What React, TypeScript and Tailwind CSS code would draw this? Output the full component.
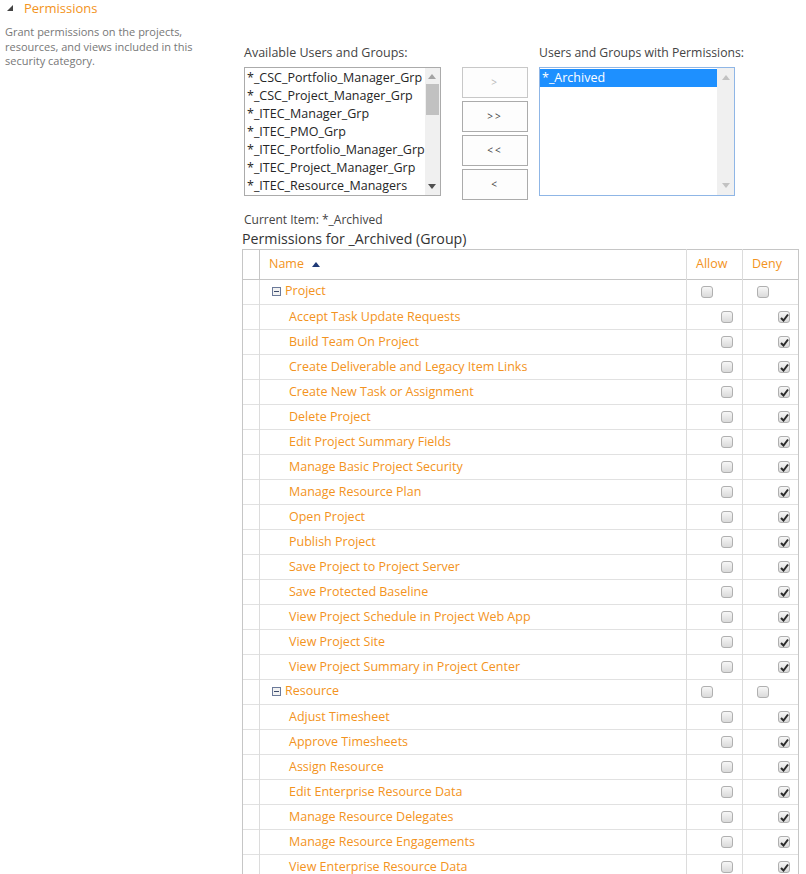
import React from 'react';

const available = [
  '*_CSC_Portfolio_Manager_Grp',
  '*_CSC_Project_Manager_Grp',
  '*_ITEC_Manager_Grp',
  '*_ITEC_PMO_Grp',
  '*_ITEC_Portfolio_Manager_Grp',
  '*_ITEC_Project_Manager_Grp',
  '*_ITEC_Resource_Managers',
];

const categories = [
  {
    name: 'Project',
    items: [
      'Accept Task Update Requests',
      'Build Team On Project',
      'Create Deliverable and Legacy Item Links',
      'Create New Task or Assignment',
      'Delete Project',
      'Edit Project Summary Fields',
      'Manage Basic Project Security',
      'Manage Resource Plan',
      'Open Project',
      'Publish Project',
      'Save Project to Project Server',
      'Save Protected Baseline',
      'View Project Schedule in Project Web App',
      'View Project Site',
      'View Project Summary in Project Center',
    ],
  },
  {
    name: 'Resource',
    items: [
      'Adjust Timesheet',
      'Approve Timesheets',
      'Assign Resource',
      'Edit Enterprise Resource Data',
      'Manage Resource Delegates',
      'Manage Resource Engagements',
      'View Enterprise Resource Data',
    ],
  },
];

const Checkbox = ({ checked }: { checked?: boolean }) => (
  <span className="inline-flex h-[12px] w-[12px] items-center justify-center rounded-[3px] border border-[#b0b0b0] bg-gradient-to-b from-[#f7f7f7] to-[#dadada] align-middle">
    {checked && (
      <svg width="9" height="9" viewBox="0 0 9 9">
        <path d="M1 5 L3.5 7.5 L8 1.5" fill="none" stroke="#2b2b2b" strokeWidth="2" />
      </svg>
    )}
  </span>
);

const ScrollArrow = ({ down, color }: { down?: boolean; color: string }) => (
  <svg width="8" height="5" viewBox="0 0 8 5">
    <path d={down ? 'M0 0 L8 0 L4 5 Z' : 'M0 5 L8 5 L4 0 Z'} fill={color} />
  </svg>
);

const MoveButton = ({ label, disabled }: { label: string; disabled?: boolean }) => (
  <button
    className={`h-[31px] w-[66px] border bg-[#fdfdfd] text-[10px] tracking-[2px] ${
      disabled ? 'border-[#c8c8c8] text-[#b8b8b8]' : 'border-[#ababab] text-[#444]'
    }`}
  >
    {label}
  </button>
);

export default function App() {
  return (
    <div className="flex h-[874px] overflow-hidden bg-white font-['Open_Sans',sans-serif] text-[#444]">
      {/* section description */}
      <div className="w-[242px] shrink-0 pl-[5px]">
        <div className="flex items-center pt-[1px]">
          <svg width="6" height="6" viewBox="0 0 6 6" className="ml-[2px]">
            <path d="M6 0 L6 6 L0 6 Z" fill="#444" />
          </svg>
          <span className="ml-[11px] text-[13px] leading-[14px] text-[#f39321]">Permissions</span>
        </div>
        <p className="mt-[10px] w-[195px] text-[11px] leading-[14.5px] text-[#777]">
          Grant permissions on the projects, resources, and views included in this security category.
        </p>
      </div>

      <div className="flex-1 pt-[44px]">
        {/* user pickers */}
        <div className="flex items-start">
          <div className="ml-[2px] w-[197px]">
            <div className="whitespace-nowrap text-[12.5px] leading-[17px] text-[#444]">Available Users and Groups:</div>
            <div className="mt-[6px] flex h-[129px] border border-[#ababab]">
              <ul className="flex-1 pl-[2px] pt-[1px] text-[12.5px] leading-[18px] text-[#262626]">
                {available.map(name => (
                  <li key={name} className="whitespace-nowrap">{name}</li>
                ))}
              </ul>
              <div className="flex w-[16px] flex-col items-center bg-[#f0f0f0] py-[6px]">
                <ScrollArrow color="#a3a3a3" />
                <div className="mt-[5px] h-[31px] w-[13px] bg-[#c1c1c1]" />
                <div className="flex-1" />
                <ScrollArrow down color="#505050" />
              </div>
            </div>
          </div>

          <div className="ml-[21px] mt-[23px] flex flex-col gap-[3px]">
            <MoveButton label=">" disabled />
            <MoveButton label=">>" />
            <MoveButton label="<<" />
            <MoveButton label="<" />
          </div>

          <div className="ml-[11px] w-[196px]">
            <div className="whitespace-nowrap text-[12.2px] leading-[17px] text-[#444]">Users and Groups with Permissions:</div>
            <div className="mt-[6px] flex h-[129px] border border-[#8fb6e6]">
              <ul className="flex-1 pt-[1px] text-[12.5px] leading-[18px]">
                <li className="bg-[#1e90ff] pl-[2px] text-white">*_Archived</li>
              </ul>
              <div className="flex w-[17px] flex-col items-center bg-[#f0f0f0] py-[7px]">
                <ScrollArrow color="#c2c2c2" />
                <div className="flex-1" />
                <ScrollArrow color="#c2c2c2" down />
              </div>
            </div>
          </div>
        </div>

        <div className="ml-[2px] mt-[11px] text-[12px] leading-[18px] text-[#444]">Current Item: *_Archived</div>
        <div className="mt-[1px] text-[14.2px] leading-[18px] text-[#333]">Permissions for _Archived (Group)</div>

        {/* permission grid */}
        <table className="mt-[1px] w-[556px] table-fixed border-collapse text-[12.5px] text-[#f39321]">
          <colgroup>
            <col className="w-[17px]" />
            <col className="w-[427px]" />
            <col className="w-[56px]" />
            <col className="w-[56px]" />
          </colgroup>
          <thead>
            <tr className="h-[30px] border-y border-[#c6c6c6]">
              <th className="border-x border-[#c6c6c6]" />
              <th className="border-r border-[#dcdcdc] pl-[9px] text-left font-normal">
                <span className="inline-flex items-center gap-[8px]">
                  Name
                  <svg width="8" height="5" viewBox="0 0 8 5">
                    <path d="M0 5 L8 5 L4 0 Z" fill="#1f3a77" />
                  </svg>
                </span>
              </th>
              <th className="border-r border-[#dcdcdc] pl-[9px] text-left font-normal">Allow</th>
              <th className="border-r border-[#c6c6c6] pl-[9px] text-left font-normal">Deny</th>
            </tr>
          </thead>
          <tbody>
            {categories.map(cat => (
              <React.Fragment key={cat.name}>
                <tr className="h-[25px] border-b border-[#e1e1e1]">
                  <td className="border-x border-[#c6c6c6] border-r-[#dcdcdc]" />
                  <td className="border-r border-[#dcdcdc] pl-[12px]">
                    <span className="inline-flex items-center">
                      <svg width="9" height="9" viewBox="0 0 9 9">
                        <rect x="0.5" y="0.5" width="8" height="8" fill="#f2f2f2" stroke="#6b7a99" />
                        <path d="M2 4.5 H7" stroke="#3b4a6b" />
                      </svg>
                      <span className="ml-[4px]">{cat.name}</span>
                    </span>
                  </td>
                  <td className="border-r border-[#dcdcdc] pl-[14px]"><Checkbox /></td>
                  <td className="border-r border-[#c6c6c6] pl-[14px]"><Checkbox /></td>
                </tr>
                {cat.items.map(item => (
                  <tr key={item} className="h-[25px] border-b border-[#e1e1e1]">
                    <td className="border-x border-[#c6c6c6] border-r-[#dcdcdc]" />
                    <td className="border-r border-[#dcdcdc] whitespace-nowrap pl-[29px]">{item}</td>
                    <td className="border-r border-[#dcdcdc] pl-[34px]"><Checkbox /></td>
                    <td className="border-r border-[#c6c6c6] pl-[35px]"><Checkbox checked /></td>
                  </tr>
                ))}
              </React.Fragment>
            ))}
          </tbody>
        </table>
      </div>
    </div>
  );
}
